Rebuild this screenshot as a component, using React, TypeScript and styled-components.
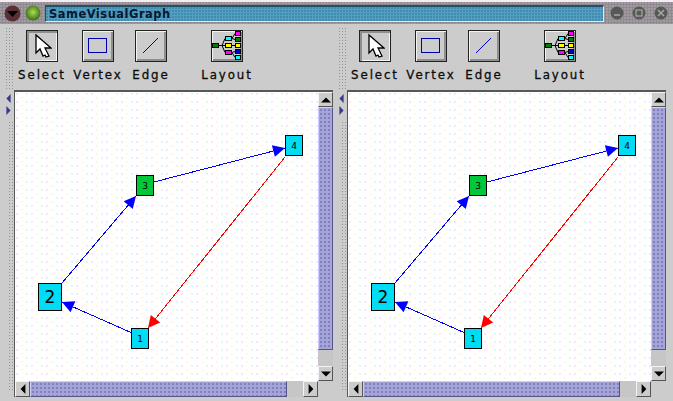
import React from "react";
import styled, { createGlobalStyle } from "styled-components";

const Global = createGlobalStyle`
  html, body { margin: 0; padding: 0; background: #cccccc; }
  body { width: 673px; height: 401px; overflow: hidden; font-family: "DejaVu Sans", sans-serif; }
`;

const Frame = styled.div`
  width: 673px;
  height: 401px;
  box-sizing: border-box;
  display: flex;
  flex-direction: column;
  background: #cccccc;
  overflow: hidden;
`;

const TitleBar = styled.div`
  height: 24px;
  flex: none;
  display: flex;
  align-items: center;
  padding: 0 0 0 4px;
  background-color: #8f8a8f;
  background-image: radial-gradient(circle at 1px 1px, #a39ca3 0.7px, transparent 1px);
  background-size: 3px 3px;
  border-top: 2px solid #f4eef4;
  box-sizing: border-box;
`;

const Orb = styled.div<{ $w: number }>`
  width: ${(p) => p.$w}px;
  height: 18px;
  flex: none;
  display: flex;
  align-items: center;
  justify-content: flex-start;
`;

const TitleStrip = styled.div`
  flex: none;
  width: 559px;
  height: 17px;
  box-sizing: border-box;
  padding-left: 3px;
  display: flex;
  align-items: center;
  background-color: #55a0c2;
  background-image: radial-gradient(circle at 1px 1px, #3f8cae 0.8px, transparent 1px);
  background-size: 3px 3px;
  border-top: 2px solid #20506a;
  border-left: 1px solid #20506a;
  border-right: 1px solid #e8e8e8;
  border-bottom: 1px solid #e8e8e8;
  color: #061830;
  font-family: "DejaVu Sans", sans-serif;
  font-weight: 700;
  font-size: 11.4px;
  letter-spacing: 0.55px;
`;

const Controls = styled.div`
  display: flex;
  align-items: center;
  gap: 8px;
  margin-left: 6px;
`;

const Panes = styled.div`
  flex: 1;
  display: flex;
  align-items: stretch;
  min-height: 0;
`;

const Pane = styled.div`
  width: 333px;
  flex: none;
  display: flex;
  flex-direction: column;
`;

const Toolbar = styled.div`
  height: 66px;
  flex: none;
  display: flex;
  align-items: flex-start;
  padding: 3px 0 0 5px;
  box-sizing: border-box;
`;

const Grip = styled.div`
  width: 10px;
  height: 62px;
  flex: none;
  background-image: radial-gradient(circle, #949494 0.8px, transparent 1px);
  background-size: 3px 3px;
`;

const Tools = styled.div`
  display: flex;
`;

const Tool = styled.div<{ $w: number }>`
  width: ${(p) => p.$w}px;
  display: flex;
  flex-direction: column;
  align-items: center;
`;

const ToolButton = styled.div<{ $pressed?: boolean }>`
  width: 32px;
  height: 32px;
  box-sizing: border-box;
  margin-top: 3px;
  display: flex;
  align-items: center;
  justify-content: center;
  background: #cccccc;
  border: 1px solid #222;
  box-shadow: ${(p) =>
    p.$pressed
      ? "inset 2px 2px 0 #8f8f8f, inset -1px -1px 0 #f4f4f4"
      : "inset 1px 1px 0 #f4f4f4, inset -2px -2px 0 #8f8f8f"};
`;

const ToolLabel = styled.div`
  margin-top: 6px;
  font-family: "DejaVu Sans", sans-serif;
  font-size: 11.8px;
  letter-spacing: 1.9px;
  line-height: 14px;
  color: #0c0c0c;
  white-space: nowrap;
  -webkit-text-stroke: 0.3px #0c0c0c;
`;

const Body = styled.div`
  flex: 1;
  display: flex;
  min-height: 0;
`;

const Gutter = styled.div`
  width: 14px;
  flex: none;
  display: flex;
  flex-direction: column;
  align-items: flex-start;
  padding: 4px 0 0 5px;
  box-sizing: border-box;
  gap: 3px;
`;

const GutterDots = styled.div`
  width: 6px;
  height: 270px;
  flex: none;
  margin: 3px 0 0 3px;
  background-image: radial-gradient(circle, #949494 0.7px, transparent 1px);
  background-size: 3px 3px;
`;

const ScrollGrid = styled.div`
  display: grid;
  grid-template-columns: 304px 15px;
  grid-template-rows: 291px 16px;
  width: 319px;
`;

const Canvas = styled.div`
  width: 304px;
  height: 291px;
  box-sizing: border-box;
  border-top: 2px solid #555a55;
  border-left: 1px solid #555a55;
  background-color: #ffffff;
  background-image:
    radial-gradient(circle at 2px 2px, #fbd8fb 0.6px, transparent 1px),
    radial-gradient(circle at 7px 6px, #fdf6c8 0.6px, transparent 1px),
    radial-gradient(circle at 12px 2px, #d0f6f2 0.6px, transparent 1px);
  background-size: 15px 8px;
  overflow: hidden;
`;

const VBar = styled.div`
  display: flex;
  flex-direction: column;
  border-top: 2px solid #555a55;
  background: #cccccc;
`;

const HBar = styled.div`
  display: flex;
  background: #cccccc;
  border-left: 1px solid #555a55;
`;

const Corner = styled.div`
  background: #cccccc;
`;

const Arrow = styled.div<{ $h?: number }>`
  width: 15px;
  height: ${(p) => p.$h ?? 15}px;
  flex: none;
  box-sizing: border-box;
  display: flex;
  align-items: center;
  justify-content: center;
  background: #cccccc;
  border: 1px solid;
  border-color: #f4f4f4 #555 #555 #f4f4f4;
`;

const Thumb = styled.div<{ $vertical?: boolean; $len: number }>`
  ${(p) => (p.$vertical ? `height: ${p.$len}px;` : `width: ${p.$len}px;`)}
  flex: none;
  box-sizing: border-box;
  background-color: #a4a4d6;
  background-image: radial-gradient(circle, #8080be 0.8px, transparent 1px);
  background-size: 4px 4px;
  border: 1px solid;
  border-color: #ccccff #55558a #55558a #ccccff;
`;

const Track = styled.div`
  flex: 1;
  background: #c6c6c6;
`;

const Right = styled.div`
  flex: 1;
`;

const NodeLabel = styled.text<{ $size: number }>`
  font-family: "DejaVu Sans", sans-serif;
  font-size: ${(p) => p.$size}px;
  fill: #000;
  text-anchor: middle;
`;

const Tri = ({ dir, color = "#000", size = 8 }: { dir: "u" | "d" | "l" | "r"; color?: string; size?: number }) => {
  const pts = {
    u: "0,8 10,8 5,2",
    d: "0,2 10,2 5,8",
    l: "8,0 8,10 2,5",
    r: "2,0 2,10 8,5",
  }[dir];
  const w = dir === "u" || dir === "d" ? size + 2 : size;
  const h = dir === "u" || dir === "d" ? size : size + 2;
  return (
    <svg width={w} height={h} viewBox="0 0 10 10" preserveAspectRatio="none">
      <polygon points={pts} fill={color} />
    </svg>
  );
};

const Cursor = () => (
  <svg width="20" height="26" viewBox="0 0 20 26">
    <path d="M4 2 L4 20 L8 16 L11 23 L13 22 L14 24 L17 23 L13 15 L19 15 Z" fill="#fff" stroke="#000" strokeWidth="1.3" />
  </svg>
);

const VertexIcon = () => (
  <svg width="20" height="16" viewBox="0 0 20 16" shapeRendering="crispEdges">
    <rect x="0.5" y="0.5" width="18" height="14" fill="none" stroke="#0000aa" strokeWidth="1" />
  </svg>
);

const EdgeIcon = () => (
  <svg width="18" height="18" viewBox="0 0 18 18" shapeRendering="crispEdges">
    <line x1="1" y1="16" x2="16" y2="1" stroke="#0000cc" strokeWidth="1" />
  </svg>
);

const LayoutIcon = () => {
  const box = (x: number, y: number, w: number, fill: string) => (
    <rect x={x + 0.5} y={y + 0.5} width={w} height="4" fill={fill} stroke="#000" strokeWidth="1" />
  );
  return (
    <svg width="30" height="30" viewBox="0 0 30 30" shapeRendering="crispEdges">
      <g stroke="#000" strokeWidth="1" fill="none">
        <path d="M7 14.5 L10 14.5" />
        <path d="M10 14.5 L13 7.5 M10 14.5 L13 14.5 M10 14.5 L13 21.5" shapeRendering="auto" />
        <path d="M20 7.5 L23 2.5 M20 7.5 L23 8.5 M20 14.5 L23 14.5 M20 21.5 L23 20.5 M20 21.5 L23 26.5" shapeRendering="auto" />
      </g>
      {box(0, 12, 6, "#008000")}
      {box(13, 5, 6, "#00ffff")}
      {box(13, 12, 6, "#ffff00")}
      {box(13, 19, 6, "#ff00ff")}
      {box(23, 0, 5, "#ff00ff")}
      {box(23, 6, 5, "#008000")}
      {box(23, 12, 5, "#ffff00")}
      {box(23, 18, 5, "#0000cc")}
      {box(23, 24, 5, "#00ffff")}
    </svg>
  );
};

const head = (x1: number, y1: number, x2: number, y2: number, color: string) => {
  const a = Math.atan2(y2 - y1, x2 - x1);
  const len = 12;
  const wid = 6;
  const bx = x2 - len * Math.cos(a);
  const by = y2 - len * Math.sin(a);
  const nx = -Math.sin(a) * wid;
  const ny = Math.cos(a) * wid;
  return <polygon points={`${x2},${y2} ${bx + nx},${by + ny} ${bx - nx},${by - ny}`} fill={color} />;
};

const edges: [number, number, number, number, string][] = [
  [117, 241, 47, 210, "#0000ff"],
  [47, 191, 121, 104, "#0000ff"],
  [139, 90, 270, 56, "#0000ff"],
  [270, 65, 133, 236, "#ff0000"],
];

const nodes = [
  { x: 116, y: 236, w: 18, h: 21, s: 9, fill: "#00dcf4", t: "1", ty: 250 },
  { x: 23, y: 191, w: 24, h: 28, s: 17, fill: "#00dcf4", t: "2", ty: 211 },
  { x: 121, y: 83, w: 18, h: 21, s: 9, fill: "#00c838", t: "3", ty: 97 },
  { x: 270, y: 43, w: 18, h: 21, s: 9, fill: "#00dcf4", t: "4", ty: 57 },
];

const Graph = () => (
  <svg width="303" height="289" viewBox="0 0 303 289" style={{ display: "block" }}>
    {edges.map(([a, b, c, d, col], i) => (
      <g key={i}>
        <line x1={a} y1={b} x2={c} y2={d} stroke={col} strokeWidth="1" shapeRendering="crispEdges" />
        {head(a, b, c, d, col)}
      </g>
    ))}
    {nodes.map((n) => (
      <g key={n.t}>
        <rect x={n.x + 0.5} y={n.y + 0.5} width={n.w - 1} height={n.h - 1} fill={n.fill} stroke="#000" strokeWidth="1" />
        <NodeLabel $size={n.s} x={n.x + n.w / 2} y={n.ty}>
          {n.t}
        </NodeLabel>
      </g>
    ))}
  </svg>
);

const GraphPane = () => (
  <Pane>
    <Toolbar>
      <Grip />
      <Tools>
        <Tool $w={54}>
          <ToolButton $pressed>
            <Cursor />
          </ToolButton>
          <ToolLabel>Select</ToolLabel>
        </Tool>
        <Tool $w={58}>
          <ToolButton>
            <VertexIcon />
          </ToolButton>
          <ToolLabel>Vertex</ToolLabel>
        </Tool>
        <Tool $w={48}>
          <ToolButton>
            <EdgeIcon />
          </ToolButton>
          <ToolLabel>Edge</ToolLabel>
        </Tool>
        <Tool $w={104}>
          <ToolButton>
            <LayoutIcon />
          </ToolButton>
          <ToolLabel>Layout</ToolLabel>
        </Tool>
      </Tools>
    </Toolbar>
    <Body>
      <Gutter>
        <Tri dir="l" color="#3a3a8c" size={7} />
        <Tri dir="r" color="#3a3a8c" size={7} />
        <GutterDots />
      </Gutter>
      <ScrollGrid>
        <Canvas>
          <Graph />
        </Canvas>
        <VBar>
          <Arrow>
            <Tri dir="u" />
          </Arrow>
          <Thumb $vertical $len={243} />
          <Track />
          <Arrow>
            <Tri dir="d" />
          </Arrow>
        </VBar>
        <HBar>
          <Arrow $h={16}>
            <Tri dir="l" />
          </Arrow>
          <Thumb $len={257} />
          <Track />
          <Arrow $h={16}>
            <Tri dir="r" />
          </Arrow>
        </HBar>
        <Corner />
      </ScrollGrid>
    </Body>
  </Pane>
);

const ControlOrb = ({ kind }: { kind: "min" | "max" | "close" }) => (
  <svg width="14" height="14" viewBox="0 0 14 14">
    <circle cx="7" cy="7" r="6.5" fill="#555a55" />
    {kind === "min" && <line x1="4" y1="9" x2="10" y2="9" stroke="#a8a8a8" strokeWidth="1.5" />}
    {kind === "max" && <rect x="4" y="4" width="6" height="6" fill="none" stroke="#a8a8a8" strokeWidth="1.2" />}
    {kind === "close" && <path d="M4 4 L10 10 M10 4 L4 10" stroke="#a8a8a8" strokeWidth="1.5" />}
  </svg>
);

export default function App() {
  return (
    <Frame>
      <Global />
      <TitleBar>
        <Orb $w={21}>
          <svg width="17" height="17" viewBox="0 0 17 17">
            <circle cx="8.5" cy="8.5" r="8" fill="#5c2e36" />
            <polygon points="3,6 14,6 8.5,12" fill="#000" />
          </svg>
        </Orb>
        <Orb $w={20}>
          <svg width="16" height="16" viewBox="0 0 16 16">
            <defs>
              <radialGradient id="g" cx="50%" cy="45%" r="55%">
                <stop offset="0%" stopColor="#a8e050" />
                <stop offset="100%" stopColor="#3e6a18" />
              </radialGradient>
            </defs>
            <circle cx="8" cy="8" r="7.5" fill="url(#g)" />
          </svg>
        </Orb>
        <TitleStrip>SameVisualGraph</TitleStrip>
        <Controls>
          <ControlOrb kind="min" />
          <ControlOrb kind="max" />
          <ControlOrb kind="close" />
        </Controls>
      </TitleBar>
      <Panes>
        <GraphPane />
        <GraphPane />
        <Right />
      </Panes>
    </Frame>
  );
}
